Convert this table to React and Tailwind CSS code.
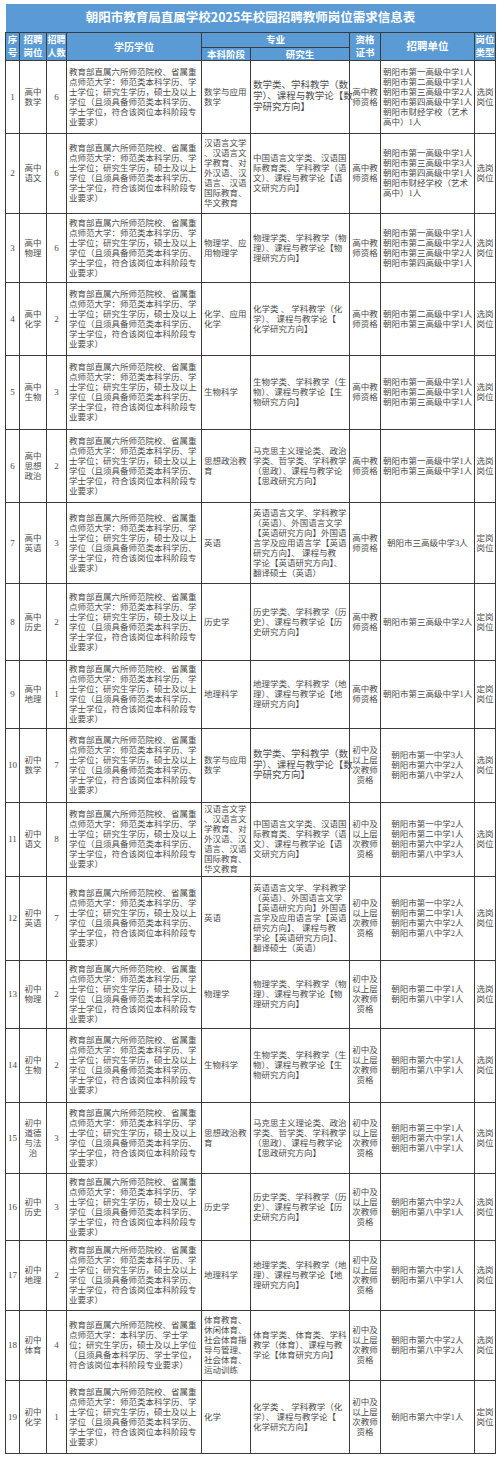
import React from "react";

// 朝阳市教育局直属学校 2025 校园招聘 — one table, lines hard-broken to match the printed sheet.

const STD = [
  "教育部直属六所师范院校、省属重",
  "点师范大学：师范类本科学历、学",
  "士学位；研究生学历，硕士及以上",
  "学位（且须具备师范类本科学历、",
  "学士学位，符合该岗位本科阶段专",
  "业要求）",
];
const PE_EDU = [
  "教育部直属六所师范院校、省属重",
  "点师范大学：本科学历、学士学",
  "位；研究生学历，硕士及以上学位",
  "（且须具备本科学历、学士学位，",
  "符合该岗位本科阶段专业要求）",
];

const G = {
  math: ["数学类、学科教学（数", "学）、课程与教学论【数", "学研究方向】"],
  chn: ["中国语言文学类、汉语国", "际教育类、学科教学（语", "文）、课程与教学论【语", "文研究方向】"],
  phy: ["物理学类、学科教学（物", "理）、课程与教学论【物", "理研究方向】"],
  chem: ["化学类 、 学科教学（化", "学）、 课程与教学论【", "化学研究方向】"],
  bio: ["生物学类、学科教学（生", "物）、课程与教学论【生", "物研究方向】"],
  pol: ["马克思主义理论类、政治", "学类、哲学类、学科教学", "（思政）、课程与教学论", "【思政研究方向】"],
  eng: ["英语语言文学、学科教学", "（英语）、外国语言文学", "【英语研究方向】外国语", "言学及应用语言学【英语", "研究方向】、 课程与教", "学论【英语研究方向】、", "翻译硕士（英语）"],
  his: ["历史学类、学科教学（历", "史）、课程与教学论【历", "史研究方向】"],
  geo: ["地理学类、学科教学（地", "理）、课程与教学论【地", "理研究方向】"],
  pe: ["体育学类、体育类、学科", "教学（体育）、课程与教", "学论【体育研究方向】"],
};
const CHN_UG = ["汉语言文学", "、汉语言文", "学教育、对", "外汉语、汉", "语言、汉语", "国际教育、", "华文教育"];
const HS = ["高中教", "师资格"];
const MS = ["初中及", "以上层", "次教师", "资格"];
const PICK = ["选岗", "岗位"];
const FIX = ["定岗", "岗位"];
const hs = (n) => `朝阳市第${n}高级中学`;
const ms = (n) => `朝阳市第${n}中学`;

const rows = [
  { h: "h-[73px]", post: ["高中", "数学"], n: 6, ug: ["数学与应用", "数学"], grad: G.math, big: true, cert: HS,
    units: [hs("一") + "1人", hs("二") + "1人", hs("三") + "2人", hs("四") + "1人", "朝阳市财经学校（艺术", "高中）1人"], left: true, type: PICK },
  { h: "h-[80px]", post: ["高中", "语文"], n: 6, ug: CHN_UG, grad: G.chn, cert: HS,
    units: [hs("一") + "1人", hs("三") + "3人", hs("四") + "1人", "朝阳市财经学校（艺术", "高中）1人"], left: true, type: PICK },
  { h: "h-[69px]", post: ["高中", "物理"], n: 6, ug: ["物理学、应", "用物理学"], grad: G.phy, cert: HS,
    units: [hs("一") + "1人", hs("二") + "2人", hs("三") + "2人", hs("四") + "1人"], left: true, type: PICK },
  { h: "h-[73px]", post: ["高中", "化学"], n: 2, ug: ["化学、应用", "化学"], grad: G.chem, cert: HS,
    units: [hs("二") + "1人", hs("三") + "1人"], left: true, type: PICK },
  { h: "h-[74px]", post: ["高中", "生物"], n: 3, ug: ["生物科学"], grad: G.bio, cert: HS,
    units: [hs("一") + "1人", hs("二") + "1人", hs("三") + "1人"], left: true, type: PICK },
  { h: "h-[73px]", post: ["高中", "思想", "政治"], n: 2, ug: ["思想政治教", "育"], grad: G.pol, cert: HS,
    units: [hs("一") + "1人", hs("三") + "1人"], left: true, type: PICK },
  { h: "h-[81px]", post: ["高中", "英语"], n: 3, ug: ["英语"], grad: G.eng, cert: HS,
    units: ["朝阳市三高级中学3人"], type: FIX },
  { h: "h-[77px]", post: ["高中", "历史"], n: 2, ug: ["历史学"], grad: G.his, cert: HS,
    units: [hs("三") + "2人"], type: FIX },
  { h: "h-[68px]", post: ["高中", "地理"], n: 1, ug: ["地理科学"], grad: G.geo, cert: HS,
    units: [hs("三") + "1人"], type: FIX },
  { h: "h-[74px]", post: ["初中", "数学"], n: 7, ug: ["数学与应用", "数学"], grad: G.math, big: true, cert: MS,
    units: [ms("一") + "3人", ms("六") + "2人", ms("八") + "2人"], type: PICK },
  { h: "h-[74px]", post: ["初中", "语文"], n: 8, ug: CHN_UG, grad: G.chn, cert: MS,
    units: [ms("一") + "2人", ms("二") + "1人", ms("六") + "2人", ms("八") + "3人"], type: PICK },
  { h: "h-[84px]", post: ["初中", "英语"], n: 7, ug: ["英语"], grad: G.eng, cert: MS,
    units: [ms("一") + "2人", ms("二") + "1人", ms("六") + "2人", ms("八") + "2人"], type: PICK },
  { h: "h-[68px]", post: ["初中", "物理"], n: 2, ug: ["物理学"], grad: G.phy, cert: MS,
    units: [ms("二") + "1人", ms("八") + "1人"], type: PICK },
  { h: "h-[74px]", post: ["初中", "生物"], n: 2, ug: ["生物科学"], grad: G.bio, cert: MS,
    units: [ms("六") + "1人", ms("八") + "1人"], type: PICK },
  { h: "h-[71px]", post: ["初中", "道德", "与法", "治"], n: 3, ug: ["思想政治教", "育"], grad: G.pol, cert: MS,
    units: [ms("三") + "1人", ms("六") + "1人", ms("八") + "1人"], type: PICK },
  { h: "h-[67px]", post: ["初中", "历史"], n: 3, ug: ["历史学"], grad: G.his, cert: MS,
    units: [ms("六") + "2人", ms("八") + "1人"], type: PICK },
  { h: "h-[70px]", post: ["初中", "地理"], n: 2, ug: ["地理科学"], grad: G.geo, cert: MS,
    units: [ms("六") + "1人", ms("八") + "1人"], type: PICK },
  { h: "h-[70px]", post: ["初中", "体育"], n: 4, edu: PE_EDU, ug: ["体育教育、", "休闲体育、", "社会体育指", "导与管理、", "社会体育、", "运动训练"], grad: G.pe, cert: MS,
    units: [ms("六") + "2人", ms("八") + "2人"], type: PICK },
  { h: "h-[73px]", post: ["初中", "化学"], n: 1, ug: ["化学"], grad: G.chem, cert: MS,
    units: [ms("六") + "1人"], type: FIX },
];

const Lines = ({ lines }) => lines.map((l, i) => <div key={i} className="whitespace-nowrap">{l}</div>);

const Th = ({ children, className = "", ...p }) => (
  <th {...p} className={`border border-[#3a3a3a] bg-[#5b9bd5] p-0 text-center align-middle font-bold text-white ${className}`}>
    {children}
  </th>
);

const Td = ({ children, className = "" }) => (
  <td className={`border border-[#3a3a3a] p-0 align-middle ${className}`}>{children}</td>
);

export default function App() {
  return (
    <div className="bg-white pt-[4px] pl-[5px] font-['Liberation_Serif','Noto_Sans_CJK_SC',serif] text-[#4a4a4a]">
      <table className="w-[490px] table-fixed border-collapse">
        <colgroup>
          <col className="w-[14px]" />
          <col className="w-[27px]" />
          <col className="w-[20px]" />
          <col className="w-[135px]" />
          <col className="w-[49px]" />
          <col className="w-[99px]" />
          <col className="w-[31px]" />
          <col className="w-[94px]" />
          <col className="w-[21px]" />
        </colgroup>
        <thead className="font-['Noto_Sans_CJK_SC',sans-serif]">
          <tr className="h-[28px]">
            <th colSpan={9} className="bg-[#5b9bd5] p-0 text-center align-middle text-[12.5px] font-bold text-white">
              朝阳市教育局直属学校2025年校园招聘教师岗位需求信息表
            </th>
          </tr>
          <tr className="h-[15px]">
            <Th rowSpan={2} className="text-[9.5px] leading-[13px]"><Lines lines={["序", "号"]} /></Th>
            <Th rowSpan={2} className="text-[9.5px] leading-[13px]"><Lines lines={["招聘", "岗位"]} /></Th>
            <Th rowSpan={2} className="text-[9px] leading-[13px]"><Lines lines={["招聘", "人数"]} /></Th>
            <Th rowSpan={2} className="text-[10px]">学历学位</Th>
            <Th colSpan={2} className="text-[9.5px] leading-[13px]">专业</Th>
            <Th rowSpan={2} className="text-[9.5px] leading-[13px]"><Lines lines={["资格", "证书"]} /></Th>
            <Th rowSpan={2} className="text-[10.5px]">招聘单位</Th>
            <Th rowSpan={2} className="text-[9.5px] leading-[13px]"><Lines lines={["岗位", "类型"]} /></Th>
          </tr>
          <tr className="h-[13px]">
            <Th className="text-[9.5px] leading-[12px]">本科阶段</Th>
            <Th className="text-[9.5px] leading-[12px]">研究生</Th>
          </tr>
        </thead>
        <tbody className="text-[8.5px] leading-[10px]">
          {rows.map((r, i) => (
            <tr key={i} className={r.h}>
              <Td className="text-center text-[9px]">{i + 1}</Td>
              <Td className="text-center"><Lines lines={r.post} /></Td>
              <Td className="text-center text-[9px]">{r.n}</Td>
              <Td className="px-[2px]"><Lines lines={r.edu || STD} /></Td>
              <Td className="px-[2px]"><Lines lines={r.ug} /></Td>
              <Td className={r.big ? "px-[2px] text-[9.5px] leading-[10.7px]" : "px-[2px]"}><Lines lines={r.grad} /></Td>
              <Td className="text-center"><Lines lines={r.cert} /></Td>
              <Td className={r.left ? "px-[2px]" : "px-[2px] text-center"}><Lines lines={r.units} /></Td>
              <Td className="text-center"><Lines lines={r.type} /></Td>
            </tr>
          ))}
        </tbody>
      </table>
    </div>
  );
}
